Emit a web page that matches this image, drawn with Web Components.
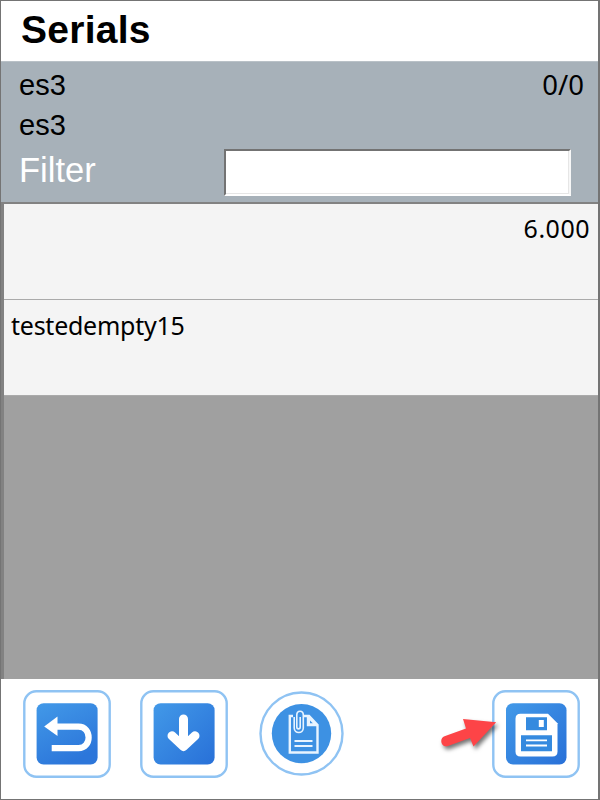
<!DOCTYPE html>
<html lang="en"><head><meta charset="utf-8"><title>Serials</title>
<style>html,body{margin:0;width:600px;height:800px;overflow:hidden;background:#fff}</style></head>
<body>
<serials-screen></serials-screen>
<script>
function define(name, html){
  customElements.define(name, class extends HTMLElement{
    constructor(){
      super();
      const t=document.createElement('template');
      t.innerHTML=html;
      this.attachShadow({mode:'open'}).appendChild(t.content.cloneNode(true));
    }
  });
}
define('screen-title', `<style>
:host{display:block;height:60px;box-sizing:border-box;padding-left:20px;background:#fff;color:#000;font:bold 39px/57px "Liberation Sans",Arial,sans-serif;white-space:nowrap}
span{display:inline-block;letter-spacing:.25px}
</style><span><slot></slot></span>`);
define('filter-panel', `<style>
:host{display:block;height:141px;box-sizing:border-box;background:#a7b1b9;border-top:1px solid #b9c1c7;padding:3px 14px 0 18px;font:29px/40px "Liberation Sans",Arial,sans-serif;color:#000}
.line{display:flex;justify-content:space-between;height:40px}
.count{font:27.5px/40px "Noto Sans",sans-serif;letter-spacing:0}
.filter{display:flex;justify-content:space-between;height:50px;padding-right:13px}
label{color:#fff;font-size:34.5px;line-height:50px}
.field{box-sizing:border-box;width:347px;height:47px;margin-top:4px;background:#fff;border:2px solid;border-color:#737373 #f7f7f7 #fff #737373;box-shadow:inset -1px -1px #e6e6e6}
</style>
<div class="line"><span><slot name="first"></slot></span><span class="count"><slot name="count"></slot></span></div>
<div class="line"><slot name="second"></slot></div>
<div class="filter"><label><slot name="label"></slot></label><div class="field"></div></div>`);
define('serial-row', `<style>
:host{display:block;height:96px;box-sizing:border-box;background:#f4f4f4;border-bottom:1px solid #aaa;padding:0 8px 0 7px;color:#000;font:25px/50px "Noto Sans",sans-serif;white-space:nowrap}
:host([amount]){text-align:right;line-height:48px}
span{display:inline-block;letter-spacing:var(--track,0)}
</style><span><slot></slot></span>`);
define('serial-list', `<style>
:host{display:block;height:477px;box-sizing:border-box;background:#a0a0a0;border-top:2px solid #828282;border-left:3px solid #828282}
</style><slot></slot>`);
define('tool-button', `<style>
:host{display:block;width:88px;height:88px}
::slotted(svg){display:block;width:88px;height:88px;overflow:visible}
</style><slot></slot>`);
define('tool-bar', `<style>
:host{display:flex;height:120px;box-sizing:border-box;padding:11px 18px 0 21.5px;background:#fff}
.back{margin-right:29.5px}.down{margin-right:30px}.save{margin-left:auto}
</style>
<tool-button class="back"><svg viewBox="0 0 88 88"><defs><linearGradient id="a" x2=".5" y2="1"><stop stop-color="#4299e8"/><stop offset="1" stop-color="#2c76da"/></linearGradient></defs>
<rect x="1.3" y="1.3" width="85.4" height="85.4" rx="12" fill="#fff" stroke="#8fc3f3" stroke-width="2.4"/><rect x="13.6" y="13.3" width="61" height="61.3" rx="7" fill="url(#a)"/>
<path d="M21.2 36.5 34.5 26.5V46Z" fill="#fff"/><path d="M32 36.6H55.5C69 36.6 69 58.2 55.5 58.2H28.7" fill="none" stroke="#fff" stroke-width="6.2"/></svg></tool-button>
<tool-button class="down"><svg viewBox="0 0 88 88"><defs><linearGradient id="b" x2="1" y2="1"><stop stop-color="#4299e8"/><stop offset="1" stop-color="#2870d8"/></linearGradient></defs>
<rect x="1.3" y="1.3" width="85.4" height="85.4" rx="12" fill="#fff" stroke="#8fc3f3" stroke-width="2.4"/><rect x="13.6" y="13.3" width="61" height="61.3" rx="7" fill="url(#b)"/>
<path d="M43.5 29V56M32 45.8 43.5 56.5 55 45.8" fill="none" stroke="#fff" stroke-width="9" stroke-linecap="round" stroke-linejoin="round"/></svg></tool-button>
<tool-button><svg viewBox="0 0 88 88"><circle cx="43.5" cy="43.5" r="41" fill="#fff" stroke="#8fc3f3" stroke-width="2.4"/><circle cx="43.5" cy="43.6" r="29.7" fill="#3d91e3"/>
<g fill="none" stroke="#e8f4ff" stroke-width="2.4"><path d="M35 26H31.8V62.5H59.5V35L51 26H46"/><path d="M50 26V35H59"/><path d="M36.5 51H54.5M36.5 56H54.5" stroke-width="2.1"/>
<path d="M42.2 27V37C42.2 39.5 38.8 39.5 38.8 37V25C38.8 20 45.3 20 45.3 25V38C45.3 44 36.2 44 36.2 38V27" stroke-width="1.6"/></g><path d="M50 26V35H59Z" fill="#e8f4ff"/><path d="M52 30.5V33.2H54.8Z" fill="#3d91e3"/></svg></tool-button>
<tool-button class="save"><svg viewBox="0 0 88 88"><defs><linearGradient id="c" x2="1" y2="1"><stop stop-color="#4299e8"/><stop offset="1" stop-color="#2870d8"/></linearGradient></defs>
<rect x="1.3" y="1.3" width="85.4" height="85.4" rx="12" fill="#fff" stroke="#8fc3f3" stroke-width="2.4"/><rect x="14" y="13.3" width="60.5" height="61.3" rx="7" fill="url(#c)"/>
<path d="M28.5 23.8H56L65.5 33.3V61.5Q65.5 66.5 60.5 66.5H28.5Q23.5 66.5 23.5 61.5V28.8Q23.5 23.8 28.5 23.8Z" fill="#fff"/>
<path d="M34 27.2H55V40.3H34ZM29 45.3H60V61.3H29Z" fill="#358adf"/><path d="M46.8 30H51.8V37H46.8ZM34 49.4H55V51.2H34ZM34 54.6H55V56.4H34Z" fill="#fff"/></svg></tool-button>`);
define('pointer-arrow', `<style>
:host{position:absolute;left:433px;top:709px;width:70px;height:46px}
svg{display:block;overflow:visible;filter:drop-shadow(2px 3px 2px rgba(0,0,0,.55))}
</style><svg width="70" height="46" viewBox="0 0 70 46"><path d="M62.2 12.3 29 9 32 18.6 10.5 26.3C4.5 28.5 7.5 38 14 36L36 28 39.5 36.5Z" fill="#fd4447"/></svg>`);
define('serials-screen', `<style>
:host{display:block;position:relative;width:600px;height:800px;box-sizing:border-box;border:1px solid #747474;border-right-width:2px;background:#fff}
.amount{--track:.5px}.name{--track:-.25px}
</style>
<screen-title>Serials</screen-title>
<filter-panel><span slot="first">es3</span><span slot="count">0/0</span><span slot="second">es3</span><span slot="label">Filter</span></filter-panel>
<serial-list><serial-row amount class="amount">6.000</serial-row><serial-row class="name">testedempty15</serial-row></serial-list>
<tool-bar></tool-bar><pointer-arrow></pointer-arrow>`);
</script></body></html>
